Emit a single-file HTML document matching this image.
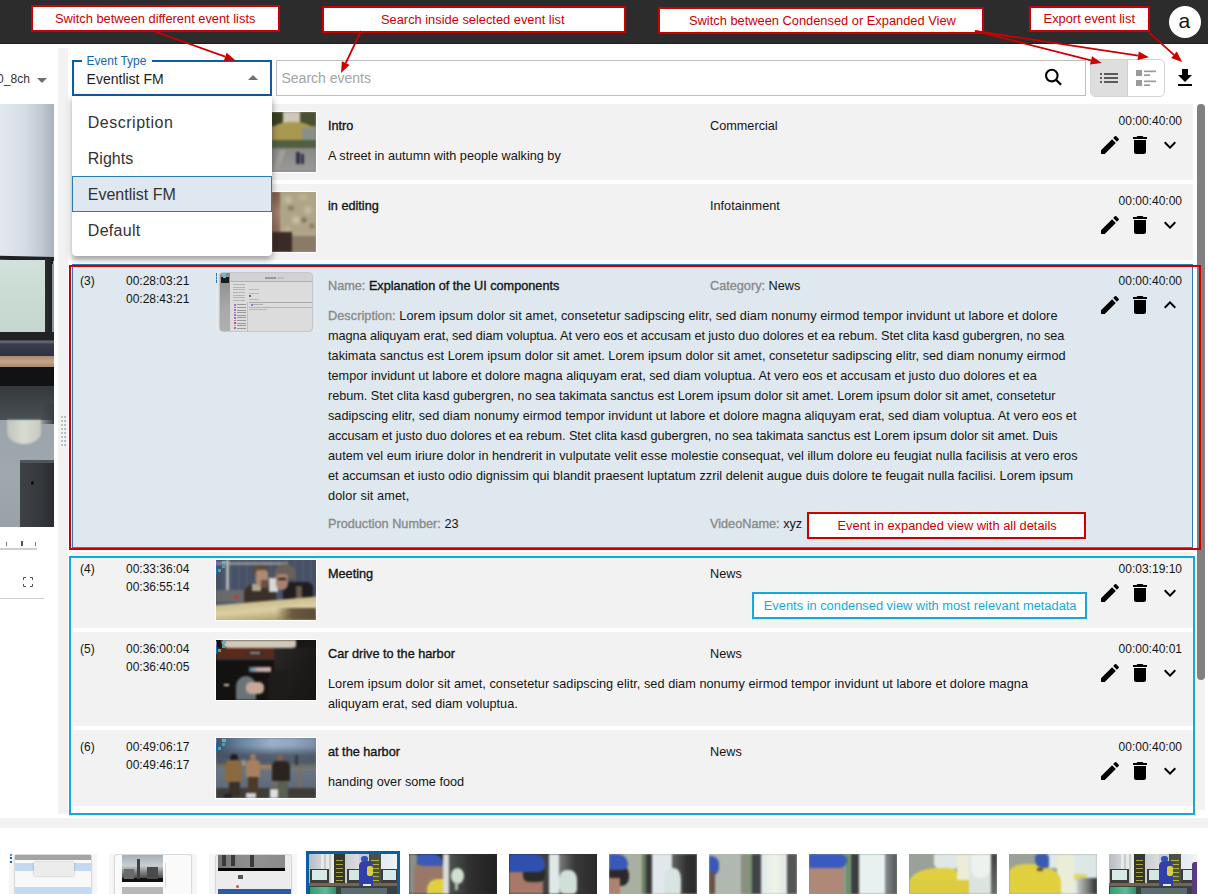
<!DOCTYPE html><html><head><meta charset="utf-8"><title>Event list</title><style>
*{margin:0;padding:0;box-sizing:border-box}
html,body{width:1208px;height:894px;overflow:hidden;background:#fff;font-family:"Liberation Sans",sans-serif;position:relative}
.t{position:absolute;white-space:nowrap}
.b{position:absolute}
svg{position:absolute;overflow:visible}
</style></head><body>
<div class="b" style="left:0px;top:0px;width:1208px;height:44px;background:#2c2c2c;border-bottom:1px solid #1f1f1f"></div>
<div class="t " style="left:-2.9px;top:68.84px;font-size:12px;line-height:20px;color:#333;">0_8ch</div>
<svg style="left:37px;top:78px" width="10" height="5"><path d="M0 0H10L5 5Z" fill="#707070"/></svg>
<div class="b" style="left:0;top:104px;width:54px;height:423px;overflow:hidden;background:#c8d0d8"><div style="position:absolute;left:0px;top:0px;width:54px;height:160px;background:linear-gradient(90deg,#e2e8ee 0%,#d6dde5 45%,#c2cad3 75%,#a9b2bc 100%)"></div><div style="position:absolute;left:-5px;top:153px;width:59px;height:4px;background:#1e2022;transform:rotate(1.2deg);transform-origin:right top"></div><div style="position:absolute;left:0px;top:156px;width:45px;height:77px;background:linear-gradient(180deg,#d2e2da,#c8dad2 60%,#c4d6ce)"></div><div style="position:absolute;left:45px;top:155px;width:8px;height:80px;background:linear-gradient(90deg,#2a2c2e,#1c1e20)"></div><div style="position:absolute;left:52px;top:160px;width:2px;height:76px;background:#8a929a"></div><div style="position:absolute;left:0px;top:228px;width:54px;height:8px;background:#202226"></div><div style="position:absolute;left:0px;top:236px;width:54px;height:16px;background:linear-gradient(180deg,#3a3e48 0,#6a7078 12%,#3a3e4a 25%,#2e3240 100%)"></div><div style="position:absolute;left:0px;top:252px;width:54px;height:11px;background:linear-gradient(180deg,#a88a70,#c4a488 50%,#a88a70)"></div><div style="position:absolute;left:0px;top:263px;width:54px;height:19px;background:#121214"></div><div style="position:absolute;left:0px;top:282px;width:54px;height:34px;background:linear-gradient(180deg,#34383c,#4a5056)"></div><div style="position:absolute;left:0px;top:316px;width:54px;height:107px;background:linear-gradient(180deg,#9aa4aa 0%,#a0a8ae 50%,#9aa2a8 100%)"></div><div style="position:absolute;left:7px;top:316px;width:34px;height:24px;background:linear-gradient(90deg,#c0c4bc,#d8dcd0 50%,#c8ccc0);border-radius:0 0 60% 60%;filter:blur(1px)"></div><div style="position:absolute;left:40px;top:300px;width:14px;height:20px;background:linear-gradient(90deg,rgba(50,54,58,0),#3a3e42)"></div><div style="position:absolute;left:20px;top:356px;width:34px;height:67px;background:linear-gradient(90deg,#3e4246,#35383c 60%,#2a2c30)"></div><div style="position:absolute;left:20px;top:356px;width:34px;height:3px;background:#50555a"></div><div style="position:absolute;left:31px;top:377px;width:3px;height:4px;background:#101010;border-radius:50%"></div></div>
<div class="b" style="left:0px;top:548px;width:37px;height:2px;background:#cfcfcf"></div>
<div class="b" style="left:6px;top:542px;width:1px;height:4px;background:#777"></div>
<div class="b" style="left:21px;top:541px;width:2px;height:5px;background:#555"></div>
<div class="b" style="left:35px;top:542px;width:1px;height:4px;background:#777"></div>
<svg style="left:23px;top:577px" width="10" height="10"><path d="M0.5 3V0.5H3M7 0.5H9.5V3M9.5 7V9.5H7M3 9.5H0.5V7" fill="none" stroke="#555" stroke-width="1"/></svg>
<div class="b" style="left:0px;top:598px;width:44px;height:1px;background:#cfcfcf"></div>
<div class="b" style="left:58px;top:48px;width:10px;height:766px;background:#f2f2f2"></div>
<div class="b" style="left:61px;top:416px;width:2px;height:2px;background:#bdbdbd"></div>
<div class="b" style="left:64px;top:416px;width:2px;height:2px;background:#bdbdbd"></div>
<div class="b" style="left:61px;top:420px;width:2px;height:2px;background:#bdbdbd"></div>
<div class="b" style="left:64px;top:420px;width:2px;height:2px;background:#bdbdbd"></div>
<div class="b" style="left:61px;top:424px;width:2px;height:2px;background:#bdbdbd"></div>
<div class="b" style="left:64px;top:424px;width:2px;height:2px;background:#bdbdbd"></div>
<div class="b" style="left:61px;top:428px;width:2px;height:2px;background:#bdbdbd"></div>
<div class="b" style="left:64px;top:428px;width:2px;height:2px;background:#bdbdbd"></div>
<div class="b" style="left:61px;top:432px;width:2px;height:2px;background:#bdbdbd"></div>
<div class="b" style="left:64px;top:432px;width:2px;height:2px;background:#bdbdbd"></div>
<div class="b" style="left:61px;top:436px;width:2px;height:2px;background:#bdbdbd"></div>
<div class="b" style="left:64px;top:436px;width:2px;height:2px;background:#bdbdbd"></div>
<div class="b" style="left:61px;top:440px;width:2px;height:2px;background:#bdbdbd"></div>
<div class="b" style="left:64px;top:440px;width:2px;height:2px;background:#bdbdbd"></div>
<div class="b" style="left:61px;top:444px;width:2px;height:2px;background:#bdbdbd"></div>
<div class="b" style="left:64px;top:444px;width:2px;height:2px;background:#bdbdbd"></div>
<div class="b" style="left:0px;top:818px;width:1208px;height:10px;background:#f2f2f2"></div>
<div class="b" style="left:72px;top:104px;width:1121px;height:76px;background:#f2f2f2"></div>
<div class="t " style="left:80px;top:110.59px;font-size:12px;line-height:20px;color:#141414;">(1)</div>
<div class="t " style="left:126px;top:110.59px;font-size:12px;line-height:20px;color:#141414;">00:27:23:21</div>
<div class="t " style="left:126px;top:128.59px;font-size:12px;line-height:20px;color:#141414;">00:28:03:21</div>
<div class="b" style="left:216px;top:112px;width:100px;height:60px;overflow:hidden;background:#8a8a88;outline:1px solid #fff"><div style="position:absolute;left:-4px;top:-4px;width:108px;height:68px;filter:blur(0.8px)"><div style="position:absolute;left:4px;top:4px;width:100px;height:60px;background:#8a8a88"><div style="position:absolute;left:0px;top:0px;width:100px;height:14px;background:#4a5030"></div><div style="position:absolute;left:66px;top:0px;width:18px;height:14px;background:#d0c8b8;border-radius:0 0 30% 30%"></div><div style="position:absolute;left:56px;top:0px;width:11px;height:14px;background:#3a4020;border-radius:0 0 40% 0"></div><div style="position:absolute;left:56px;top:10px;width:44px;height:22px;background:#a89850;border-radius:40% 50% 0 0"></div><div style="position:absolute;left:86px;top:16px;width:14px;height:16px;background:#8a9088"></div><div style="position:absolute;left:56px;top:28px;width:44px;height:9px;background:#506040"></div><div style="position:absolute;left:0px;top:36px;width:100px;height:24px;background:linear-gradient(180deg,#8a8a88,#9a9896)"></div><div style="position:absolute;left:60px;top:38px;width:6px;height:22px;background:#a09e98;transform:skewX(-20deg)"></div><div style="position:absolute;left:80px;top:40px;width:4px;height:12px;background:#30304a"></div><div style="position:absolute;left:85px;top:42px;width:3px;height:10px;background:#30304a"></div></div></div></div>
<div class="t " style="left:328px;top:115.60px;font-size:12.7px;line-height:20px;color:#141414;font-weight:normal;-webkit-text-stroke:0.35px currentColor;">Intro</div>
<div class="t " style="left:710px;top:115.60px;font-size:12.7px;line-height:20px;color:#141414;">Commercial</div>
<div class="t " style="left:328px;top:145.60px;font-size:12.7px;line-height:20px;color:#141414;">A street in autumn with people walking by</div>
<div class="t" style="right:26px;top:111.24px;font-size:12px;line-height:20px;color:#141414;">00:00:40:00</div>
<svg style="left:1098px;top:133px" width="24" height="24" viewBox="0 0 24 24"><path d="M3 17.25V21h3.75L17.81 9.94l-3.75-3.75L3 17.25zM20.71 7.04c.39-.39.39-1.02 0-1.41l-2.34-2.34a.996.996 0 0 0-1.41 0l-1.83 1.83 3.75 3.75 1.83-1.83z" fill="#000"/></svg>
<svg style="left:1128px;top:133px" width="24" height="24" viewBox="0 0 24 24"><path d="M6 19c0 1.1.9 2 2 2h8c1.1 0 2-.9 2-2V7H6v12zM19 4h-3.5l-1-1h-5l-1 1H5v2h14V4z" fill="#000"/></svg>
<svg style="left:1158px;top:133px" width="24" height="24" viewBox="0 0 24 24"><path d="M16.59 8.59L12 13.17 7.41 8.59 6 10l6 6 6-6z" fill="#000"/></svg>
<div class="b" style="left:72px;top:184px;width:1121px;height:76px;background:#f2f2f2"></div>
<div class="t " style="left:80px;top:190.59px;font-size:12px;line-height:20px;color:#141414;">(2)</div>
<div class="t " style="left:126px;top:190.59px;font-size:12px;line-height:20px;color:#141414;">00:27:43:21</div>
<div class="t " style="left:126px;top:208.59px;font-size:12px;line-height:20px;color:#141414;">00:28:23:21</div>
<div class="b" style="left:216px;top:192px;width:100px;height:60px;overflow:hidden;background:#a89c80;outline:1px solid #fff"><div style="position:absolute;left:-4px;top:-4px;width:108px;height:68px;filter:blur(0.8px)"><div style="position:absolute;left:4px;top:4px;width:100px;height:60px;background:#a89c80"><div style="position:absolute;left:56px;top:0px;width:12px;height:40px;background:linear-gradient(180deg,#7a5a48,#a08070 50%,#8a6a58)"></div><div style="position:absolute;left:64px;top:0px;width:36px;height:46px;background:#b0a488"></div><div style="position:absolute;left:66px;top:2px;width:12px;height:12px;background:radial-gradient(#c8c0a8,rgba(0,0,0,0) 70%)"></div><div style="position:absolute;left:80px;top:0px;width:14px;height:10px;background:radial-gradient(#c0b498,rgba(0,0,0,0) 70%)"></div><div style="position:absolute;left:70px;top:12px;width:10px;height:8px;background:radial-gradient(#7a6e58,rgba(0,0,0,0) 70%)"></div><div style="position:absolute;left:86px;top:12px;width:12px;height:12px;background:radial-gradient(#c8c0a8,rgba(0,0,0,0) 70%)"></div><div style="position:absolute;left:74px;top:22px;width:12px;height:12px;background:radial-gradient(#d0c8b0,rgba(0,0,0,0) 70%)"></div><div style="position:absolute;left:84px;top:24px;width:8px;height:8px;background:radial-gradient(#6a6050,rgba(0,0,0,0) 70%)"></div><div style="position:absolute;left:92px;top:30px;width:8px;height:8px;background:radial-gradient(#7a7058,rgba(0,0,0,0) 70%)"></div><div style="position:absolute;left:66px;top:32px;width:10px;height:10px;background:radial-gradient(#c0b498,rgba(0,0,0,0) 70%)"></div><div style="position:absolute;left:56px;top:40px;width:20px;height:20px;background:#3a2a28"></div><div style="position:absolute;left:76px;top:44px;width:24px;height:16px;background:#8a7a68"></div></div></div></div>
<div class="t " style="left:328px;top:195.60px;font-size:12.7px;line-height:20px;color:#141414;font-weight:normal;-webkit-text-stroke:0.35px currentColor;">in editing</div>
<div class="t " style="left:710px;top:195.60px;font-size:12.7px;line-height:20px;color:#141414;">Infotainment</div>
<div class="t" style="right:26px;top:191.24px;font-size:12px;line-height:20px;color:#141414;">00:00:40:00</div>
<svg style="left:1098px;top:213px" width="24" height="24" viewBox="0 0 24 24"><path d="M3 17.25V21h3.75L17.81 9.94l-3.75-3.75L3 17.25zM20.71 7.04c.39-.39.39-1.02 0-1.41l-2.34-2.34a.996.996 0 0 0-1.41 0l-1.83 1.83 3.75 3.75 1.83-1.83z" fill="#000"/></svg>
<svg style="left:1128px;top:213px" width="24" height="24" viewBox="0 0 24 24"><path d="M6 19c0 1.1.9 2 2 2h8c1.1 0 2-.9 2-2V7H6v12zM19 4h-3.5l-1-1h-5l-1 1H5v2h14V4z" fill="#000"/></svg>
<svg style="left:1158px;top:213px" width="24" height="24" viewBox="0 0 24 24"><path d="M16.59 8.59L12 13.17 7.41 8.59 6 10l6 6 6-6z" fill="#000"/></svg>
<div class="b" style="left:72px;top:264px;width:1121px;height:284px;background:#dee8ee;border:1px solid #2b7bb9"></div>
<div class="t " style="left:80px;top:270.59px;font-size:12px;line-height:20px;color:#141414;">(3)</div>
<div class="t " style="left:126px;top:270.59px;font-size:12px;line-height:20px;color:#141414;">00:28:03:21</div>
<div class="t " style="left:126px;top:288.59px;font-size:12px;line-height:20px;color:#141414;">00:28:43:21</div>
<div class="b" style="left:216px;top:272px;width:100px;height:60px;background:#e6eaee;overflow:hidden"><div style="position:absolute;left:4px;top:1px;width:92px;height:58px;background:#dcdcdc;border-radius:3px;box-shadow:0 0 2px rgba(0,0,0,.55)"></div><div style="position:absolute;left:4px;top:1px;width:10px;height:58px;background:linear-gradient(#8a8a8a,#a8a8a8 60%,#b0b0b0);border-radius:3px 0 0 3px"></div><div style="position:absolute;left:5px;top:5px;width:8px;height:6px;background:#1c1c1c"></div><div style="position:absolute;left:14px;top:1px;width:82px;height:8px;background:#d2d2d2;border-radius:0 3px 0 0"></div><div style="position:absolute;left:14px;top:9px;width:82px;height:1px;background:#b0b0b0"></div><div style="position:absolute;left:49px;top:5px;width:11px;height:2px;background:#9a9a9a"></div><div style="position:absolute;left:61px;top:5px;width:7px;height:2px;background:#c0c0c0"></div><div style="position:absolute;left:17px;top:12px;width:12px;height:1px;background:#b4b4b4"></div><div style="position:absolute;left:17px;top:14.5px;width:12px;height:1px;background:#b4b4b4"></div><div style="position:absolute;left:17px;top:17px;width:12px;height:1px;background:#b4b4b4"></div><div style="position:absolute;left:17px;top:20px;width:12px;height:1px;background:#b4b4b4"></div><div style="position:absolute;left:17px;top:22.5px;width:12px;height:1px;background:#b4b4b4"></div><div style="position:absolute;left:17px;top:25px;width:12px;height:1px;background:#b4b4b4"></div><div style="position:absolute;left:17px;top:27.5px;width:12px;height:1px;background:#b4b4b4"></div><div style="position:absolute;left:33px;top:17px;width:10px;height:1px;background:#b8b8b8"></div><div style="position:absolute;left:33px;top:21px;width:10px;height:1px;background:#b8b8b8"></div><div style="position:absolute;left:33px;top:27px;width:10px;height:1px;background:#b8b8b8"></div><div style="position:absolute;left:33px;top:23px;width:1.5px;height:2px;background:#666"></div><div style="position:absolute;left:33px;top:30px;width:63px;height:1px;background:#a8a8a8"></div><div style="position:absolute;left:33px;top:35px;width:63px;height:1px;background:#b4b4b4"></div><div style="position:absolute;left:31px;top:30px;width:1px;height:29px;background:#c0c0c0"></div><div style="position:absolute;left:18px;top:32.0px;width:2px;height:1.6px;background:#a070d0"></div><div style="position:absolute;left:21px;top:32.3px;width:9px;height:1px;background:#9a9a9a"></div><div style="position:absolute;left:18px;top:34.6px;width:2px;height:1.6px;background:#a070d0"></div><div style="position:absolute;left:21px;top:34.9px;width:9px;height:1px;background:#9a9a9a"></div><div style="position:absolute;left:18px;top:37.2px;width:2px;height:1.6px;background:#a070d0"></div><div style="position:absolute;left:21px;top:37.5px;width:9px;height:1px;background:#9a9a9a"></div><div style="position:absolute;left:18px;top:39.8px;width:2px;height:1.6px;background:#a070d0"></div><div style="position:absolute;left:21px;top:40.099999999999994px;width:9px;height:1px;background:#9a9a9a"></div><div style="position:absolute;left:18px;top:42.4px;width:2px;height:1.6px;background:#a070d0"></div><div style="position:absolute;left:21px;top:42.699999999999996px;width:9px;height:1px;background:#9a9a9a"></div><div style="position:absolute;left:18px;top:45.0px;width:2px;height:1.6px;background:#a070d0"></div><div style="position:absolute;left:21px;top:45.3px;width:9px;height:1px;background:#9a9a9a"></div><div style="position:absolute;left:18px;top:47.6px;width:2px;height:1.6px;background:#a070d0"></div><div style="position:absolute;left:21px;top:47.9px;width:9px;height:1px;background:#9a9a9a"></div><div style="position:absolute;left:18px;top:50.2px;width:2px;height:1.6px;background:#d05050"></div><div style="position:absolute;left:21px;top:50.5px;width:9px;height:1px;background:#9a9a9a"></div><div style="position:absolute;left:18px;top:52.8px;width:2px;height:1.6px;background:#a0c040"></div><div style="position:absolute;left:21px;top:53.099999999999994px;width:9px;height:1px;background:#9a9a9a"></div><div style="position:absolute;left:18px;top:55.400000000000006px;width:2px;height:1.6px;background:#a070d0"></div><div style="position:absolute;left:21px;top:55.7px;width:9px;height:1px;background:#9a9a9a"></div><div style="position:absolute;left:35px;top:31.5px;width:1.5px;height:2px;background:#a070d0"></div><div style="position:absolute;left:37px;top:32px;width:10px;height:1px;background:#b0b0b0"></div><div style="position:absolute;left:33px;top:37px;width:18px;height:1px;background:#b8b8b8"></div><div style="position:absolute;left:6px;top:1px;width:4px;height:3px;background:#60c0d0"></div><div style="position:absolute;left:7px;top:4px;width:3px;height:2px;background:#60c0d0"></div><div style="position:absolute;left:0px;top:1px;width:1px;height:10px;border-left:1px dashed #3070c0"></div></div>
<div class="t " style="left:328px;top:275.60px;font-size:12.7px;line-height:20px;color:#141414;font-weight:normal;-webkit-text-stroke:0.35px currentColor;"><span style="color:#8a8a8a">Name:</span> Explanation of the UI components</div>
<div class="t " style="left:710px;top:275.60px;font-size:12.7px;line-height:20px;color:#141414;font-weight:normal;-webkit-text-stroke:0.35px currentColor;"><span style="color:#8a8a8a">Category:</span> <span style="-webkit-text-stroke:0">News</span></div>
<div class="t " style="left:328px;top:305.60px;font-size:12.7px;line-height:20px;color:#141414;letter-spacing:0.0575px"><span style="color:#8a8a8a;-webkit-text-stroke:0.35px currentColor">Description:</span> Lorem ipsum dolor sit amet, consetetur sadipscing elitr, sed diam nonumy eirmod tempor invidunt ut labore et dolore</div>
<div class="t " style="left:328px;top:325.60px;font-size:12.7px;line-height:20px;color:#141414;letter-spacing:-0.0713px">magna aliquyam erat, sed diam voluptua. At vero eos et accusam et justo duo dolores et ea rebum. Stet clita kasd gubergren, no sea</div>
<div class="t " style="left:328px;top:345.60px;font-size:12.7px;line-height:20px;color:#141414;letter-spacing:0.0220px">takimata sanctus est Lorem ipsum dolor sit amet. Lorem ipsum dolor sit amet, consetetur sadipscing elitr, sed diam nonumy eirmod</div>
<div class="t " style="left:328px;top:365.60px;font-size:12.7px;line-height:20px;color:#141414;letter-spacing:-0.0056px">tempor invidunt ut labore et dolore magna aliquyam erat, sed diam voluptua. At vero eos et accusam et justo duo dolores et ea</div>
<div class="t " style="left:328px;top:385.60px;font-size:12.7px;line-height:20px;color:#141414;letter-spacing:-0.0236px">rebum. Stet clita kasd gubergren, no sea takimata sanctus est Lorem ipsum dolor sit amet. Lorem ipsum dolor sit amet, consetetur</div>
<div class="t " style="left:328px;top:405.60px;font-size:12.7px;line-height:20px;color:#141414;letter-spacing:0.0231px">sadipscing elitr, sed diam nonumy eirmod tempor invidunt ut labore et dolore magna aliquyam erat, sed diam voluptua. At vero eos et</div>
<div class="t " style="left:328px;top:425.60px;font-size:12.7px;line-height:20px;color:#141414;letter-spacing:-0.0570px">accusam et justo duo dolores et ea rebum. Stet clita kasd gubergren, no sea takimata sanctus est Lorem ipsum dolor sit amet. Duis</div>
<div class="t " style="left:328px;top:445.60px;font-size:12.7px;line-height:20px;color:#141414;letter-spacing:0.0144px">autem vel eum iriure dolor in hendrerit in vulputate velit esse molestie consequat, vel illum dolore eu feugiat nulla facilisis at vero eros</div>
<div class="t " style="left:328px;top:465.60px;font-size:12.7px;line-height:20px;color:#141414;letter-spacing:0.0185px">et accumsan et iusto odio dignissim qui blandit praesent luptatum zzril delenit augue duis dolore te feugait nulla facilisi. Lorem ipsum</div>
<div class="t " style="left:328px;top:485.60px;font-size:12.7px;line-height:20px;color:#141414;letter-spacing:0.1143px">dolor sit amet,</div>
<div class="t " style="left:328px;top:513.60px;font-size:12.7px;line-height:20px;color:#141414;font-weight:normal;-webkit-text-stroke:0.35px currentColor;"><span style="color:#8a8a8a">Production Number:</span> <span style="-webkit-text-stroke:0">23</span></div>
<div class="t " style="left:710px;top:513.60px;font-size:12.7px;line-height:20px;color:#141414;font-weight:normal;-webkit-text-stroke:0.35px currentColor;"><span style="color:#8a8a8a">VideoName:</span> <span style="-webkit-text-stroke:0">xyz</span></div>
<div class="t" style="right:26px;top:271.24px;font-size:12px;line-height:20px;color:#141414;">00:00:40:00</div>
<svg style="left:1098px;top:293px" width="24" height="24" viewBox="0 0 24 24"><path d="M3 17.25V21h3.75L17.81 9.94l-3.75-3.75L3 17.25zM20.71 7.04c.39-.39.39-1.02 0-1.41l-2.34-2.34a.996.996 0 0 0-1.41 0l-1.83 1.83 3.75 3.75 1.83-1.83z" fill="#000"/></svg>
<svg style="left:1128px;top:293px" width="24" height="24" viewBox="0 0 24 24"><path d="M6 19c0 1.1.9 2 2 2h8c1.1 0 2-.9 2-2V7H6v12zM19 4h-3.5l-1-1h-5l-1 1H5v2h14V4z" fill="#000"/></svg>
<svg style="left:1158px;top:293px" width="24" height="24" viewBox="0 0 24 24"><path d="M12 8l-6 6 1.41 1.41L12 10.83l4.59 4.58L18 14z" fill="#000"/></svg>
<div class="b" style="left:72px;top:552px;width:1121px;height:76px;background:#f2f2f2"></div>
<div class="t " style="left:80px;top:558.59px;font-size:12px;line-height:20px;color:#141414;">(4)</div>
<div class="t " style="left:126px;top:558.59px;font-size:12px;line-height:20px;color:#141414;">00:33:36:04</div>
<div class="t " style="left:126px;top:576.59px;font-size:12px;line-height:20px;color:#141414;">00:36:55:14</div>
<div class="b" style="left:216px;top:560px;width:100px;height:60px;overflow:hidden;background:#4a5468;outline:1px solid #fff"><div style="position:absolute;left:-4px;top:-4px;width:108px;height:68px;filter:blur(0.8px)"><div style="position:absolute;left:4px;top:4px;width:100px;height:60px;background:#4a5468"><div style="position:absolute;left:0px;top:0px;width:100px;height:42px;background:repeating-linear-gradient(90deg,#465066 0 6px,#505a6c 6px 8px)"></div><div style="position:absolute;left:0px;top:2px;width:72px;height:3px;background:#8a8e90"></div><div style="position:absolute;left:10px;top:0px;width:3px;height:32px;background:#b8b8b0"></div><div style="position:absolute;left:0px;top:30px;width:28px;height:12px;background:#6a6a6c"></div><div style="position:absolute;left:18px;top:35px;width:5px;height:4px;background:#a04848"></div><div style="position:absolute;left:28px;top:24px;width:32px;height:22px;background:#3a3028;border-radius:10px 10px 0 0"></div><div style="position:absolute;left:36px;top:24px;width:9px;height:7px;background:#b0a890"></div><div style="position:absolute;left:37px;top:5px;width:15px;height:9px;background:#5a4a3c;border-radius:6px 6px 0 0"></div><div style="position:absolute;left:40px;top:10px;width:12px;height:17px;background:#b08a70;border-radius:2px 4px 6px 6px"></div><div style="position:absolute;left:45px;top:20px;width:7px;height:8px;background:#6a5040"></div><div style="position:absolute;left:53px;top:18px;width:9px;height:14px;background:#d8d8d8"></div><div style="position:absolute;left:67px;top:22px;width:30px;height:20px;background:#201c20;border-radius:8px 6px 0 0"></div><div style="position:absolute;left:80px;top:26px;width:6px;height:16px;background:#6a5a48"></div><div style="position:absolute;left:58px;top:4px;width:22px;height:15px;background:#6a6058;border-radius:10px 10px 4px 4px"></div><div style="position:absolute;left:60px;top:14px;width:12px;height:16px;background:#a88070;border-radius:3px 3px 6px 6px"></div><div style="position:absolute;left:62px;top:18px;width:8px;height:2px;background:#202020"></div><div style="position:absolute;left:-10px;top:41px;width:120px;height:30px;background:linear-gradient(180deg,#c8bc8a,#dcd0a4 30%,#b8a878 60%,#8a7a54);transform:rotate(-5deg)"></div><div style="position:absolute;left:60px;top:48px;width:40px;height:12px;background:linear-gradient(90deg,rgba(106,90,64,0),#6a5a40 40%,#5a4c38)"></div></div></div></div><div class="b" style="left:216px;top:560px;width:12px;height:16px"><div style="position:absolute;left:6px;top:1px;width:3.5px;height:3px;background:#5ab8c0;filter:blur(0.4px)"></div><div style="position:absolute;left:6px;top:5px;width:3px;height:3px;background:#3aa8b0;filter:blur(0.4px)"></div><div style="position:absolute;left:2px;top:9px;width:3px;height:3px;background:#3aa8b0;filter:blur(0.4px)"></div><div style="position:absolute;left:0px;top:1px;width:1px;height:4px;background:#7a6ab8"></div><div style="position:absolute;left:0px;top:5px;width:1px;height:9px;background:#1a70b0"></div></div>
<div class="t " style="left:328px;top:563.60px;font-size:12.7px;line-height:20px;color:#141414;font-weight:normal;-webkit-text-stroke:0.35px currentColor;">Meeting</div>
<div class="t " style="left:710px;top:563.60px;font-size:12.7px;line-height:20px;color:#141414;">News</div>
<div class="t" style="right:26px;top:559.24px;font-size:12px;line-height:20px;color:#141414;">00:03:19:10</div>
<svg style="left:1098px;top:581px" width="24" height="24" viewBox="0 0 24 24"><path d="M3 17.25V21h3.75L17.81 9.94l-3.75-3.75L3 17.25zM20.71 7.04c.39-.39.39-1.02 0-1.41l-2.34-2.34a.996.996 0 0 0-1.41 0l-1.83 1.83 3.75 3.75 1.83-1.83z" fill="#000"/></svg>
<svg style="left:1128px;top:581px" width="24" height="24" viewBox="0 0 24 24"><path d="M6 19c0 1.1.9 2 2 2h8c1.1 0 2-.9 2-2V7H6v12zM19 4h-3.5l-1-1h-5l-1 1H5v2h14V4z" fill="#000"/></svg>
<svg style="left:1158px;top:581px" width="24" height="24" viewBox="0 0 24 24"><path d="M16.59 8.59L12 13.17 7.41 8.59 6 10l6 6 6-6z" fill="#000"/></svg>
<div class="b" style="left:72px;top:632px;width:1121px;height:94px;background:#f2f2f2"></div>
<div class="t " style="left:80px;top:638.59px;font-size:12px;line-height:20px;color:#141414;">(5)</div>
<div class="t " style="left:126px;top:638.59px;font-size:12px;line-height:20px;color:#141414;">00:36:00:04</div>
<div class="t " style="left:126px;top:656.59px;font-size:12px;line-height:20px;color:#141414;">00:36:40:05</div>
<div class="b" style="left:216px;top:640px;width:100px;height:60px;overflow:hidden;background:#141210;outline:1px solid #fff"><div style="position:absolute;left:-4px;top:-4px;width:108px;height:68px;filter:blur(0.8px)"><div style="position:absolute;left:4px;top:4px;width:100px;height:60px;background:#141210"><div style="position:absolute;left:6px;top:0px;width:76px;height:8px;background:#d0c8b8;border-radius:0 0 6px 6px"></div><div style="position:absolute;left:0px;top:8px;width:78px;height:10px;background:#5a2a1a"></div><div style="position:absolute;left:30px;top:11px;width:18px;height:5px;background:#3a3030"></div><div style="position:absolute;left:34px;top:12px;width:10px;height:2px;background:#9a8a88"></div><div style="position:absolute;left:0px;top:18px;width:80px;height:2px;background:#3a3430"></div><div style="position:absolute;left:33px;top:27px;width:22px;height:5px;background:linear-gradient(90deg,#3a7a98,#c0a8a8 40%,#d0b0a8)"></div><div style="position:absolute;left:20px;top:36px;width:20px;height:24px;background:#6a7478;border-radius:10px 10px 0 0"></div><div style="position:absolute;left:30px;top:42px;width:18px;height:12px;background:#c8a898;border-radius:5px"></div><div style="position:absolute;left:8px;top:44px;width:5px;height:2px;background:#d0d0c8"></div><div style="position:absolute;left:58px;top:8px;width:42px;height:52px;background:linear-gradient(120deg,#2a2826,#1e1c1a 50%,#181614)"></div><div style="position:absolute;left:52px;top:30px;width:20px;height:30px;background:#1e1c1a;border-radius:10px 0 0 0"></div><div style="position:absolute;left:80px;top:0px;width:20px;height:8px;background:#1a1816"></div></div></div></div><div class="b" style="left:216px;top:640px;width:12px;height:16px"><div style="position:absolute;left:6px;top:1px;width:3.5px;height:3px;background:#5ab8c0;filter:blur(0.4px)"></div><div style="position:absolute;left:6px;top:5px;width:3px;height:3px;background:#3aa8b0;filter:blur(0.4px)"></div><div style="position:absolute;left:2px;top:9px;width:3px;height:3px;background:#3aa8b0;filter:blur(0.4px)"></div><div style="position:absolute;left:0px;top:1px;width:1px;height:4px;background:#7a6ab8"></div><div style="position:absolute;left:0px;top:5px;width:1px;height:9px;background:#1a70b0"></div></div>
<div class="t " style="left:328px;top:643.60px;font-size:12.7px;line-height:20px;color:#141414;font-weight:normal;-webkit-text-stroke:0.35px currentColor;">Car drive to the harbor</div>
<div class="t " style="left:710px;top:643.60px;font-size:12.7px;line-height:20px;color:#141414;">News</div>
<div class="t " style="left:328px;top:673.60px;font-size:12.7px;line-height:20px;color:#141414;letter-spacing:0.0500px">Lorem ipsum dolor sit amet, consetetur sadipscing elitr, sed diam nonumy eirmod tempor invidunt ut labore et dolore magna</div>
<div class="t " style="left:328px;top:693.60px;font-size:12.7px;line-height:20px;color:#141414;">aliquyam erat, sed diam voluptua.</div>
<div class="t" style="right:26px;top:639.24px;font-size:12px;line-height:20px;color:#141414;">00:00:40:01</div>
<svg style="left:1098px;top:661px" width="24" height="24" viewBox="0 0 24 24"><path d="M3 17.25V21h3.75L17.81 9.94l-3.75-3.75L3 17.25zM20.71 7.04c.39-.39.39-1.02 0-1.41l-2.34-2.34a.996.996 0 0 0-1.41 0l-1.83 1.83 3.75 3.75 1.83-1.83z" fill="#000"/></svg>
<svg style="left:1128px;top:661px" width="24" height="24" viewBox="0 0 24 24"><path d="M6 19c0 1.1.9 2 2 2h8c1.1 0 2-.9 2-2V7H6v12zM19 4h-3.5l-1-1h-5l-1 1H5v2h14V4z" fill="#000"/></svg>
<svg style="left:1158px;top:661px" width="24" height="24" viewBox="0 0 24 24"><path d="M16.59 8.59L12 13.17 7.41 8.59 6 10l6 6 6-6z" fill="#000"/></svg>
<div class="b" style="left:72px;top:730px;width:1121px;height:76px;background:#f2f2f2"></div>
<div class="t " style="left:80px;top:736.59px;font-size:12px;line-height:20px;color:#141414;">(6)</div>
<div class="t " style="left:126px;top:736.59px;font-size:12px;line-height:20px;color:#141414;">00:49:06:17</div>
<div class="t " style="left:126px;top:754.59px;font-size:12px;line-height:20px;color:#141414;">00:49:46:17</div>
<div class="b" style="left:216px;top:738px;width:100px;height:60px;overflow:hidden;background:#6a7686;outline:1px solid #fff"><div style="position:absolute;left:-4px;top:-4px;width:108px;height:68px;filter:blur(0.8px)"><div style="position:absolute;left:4px;top:4px;width:100px;height:60px;background:#6a7686"><div style="position:absolute;left:0px;top:0px;width:100px;height:27px;background:linear-gradient(90deg,#3e5068,#6a84a0 25%,#9ab0c8 55%,#90a8c0 75%,#7a90a8)"></div><div style="position:absolute;left:0px;top:8px;width:100px;height:19px;background:linear-gradient(180deg,rgba(70,80,96,0),rgba(70,80,96,.85) 50%,#505a66)"></div><div style="position:absolute;left:0px;top:26px;width:100px;height:4px;background:#6a7064"></div><div style="position:absolute;left:25px;top:22px;width:5px;height:6px;background:#8a9090"></div><div style="position:absolute;left:79px;top:17px;width:3px;height:10px;background:#3a3a40"></div><div style="position:absolute;left:0px;top:30px;width:100px;height:21px;background:linear-gradient(180deg,#6a7686,#5e6a7a)"></div><div style="position:absolute;left:55px;top:31px;width:45px;height:1px;background:#8a7a68"></div><div style="position:absolute;left:58px;top:31px;width:2px;height:22px;background:#8a6a4a"></div><div style="position:absolute;left:83px;top:31px;width:2px;height:24px;background:#8a6a4a"></div><div style="position:absolute;left:0px;top:50px;width:100px;height:10px;background:#3e3c38"></div><div style="position:absolute;left:14px;top:16px;width:8px;height:6px;background:#1e1e20;border-radius:4px 4px 0 0"></div><div style="position:absolute;left:9px;top:22px;width:17px;height:22px;background:#8a6a40;border-radius:5px 5px 2px 2px"></div><div style="position:absolute;left:13px;top:44px;width:11px;height:14px;background:#3a3028"></div><div style="position:absolute;left:34px;top:16px;width:6px;height:6px;background:#a07860;border-radius:3px"></div><div style="position:absolute;left:30px;top:22px;width:14px;height:17px;background:#a88060;border-radius:4px 4px 0 0"></div><div style="position:absolute;left:42px;top:27px;width:14px;height:4px;background:#a08060"></div><div style="position:absolute;left:32px;top:39px;width:10px;height:19px;background:#4a3a28"></div><div style="position:absolute;left:61px;top:17px;width:6px;height:6px;background:#8a6048;border-radius:3px"></div><div style="position:absolute;left:56px;top:23px;width:18px;height:20px;background:#2a2420;border-radius:5px 5px 0 0"></div><div style="position:absolute;left:62px;top:43px;width:10px;height:17px;background:#5a6050"></div><div style="position:absolute;left:54px;top:51px;width:8px;height:9px;background:#e0e0e0"></div><div style="position:absolute;left:30px;top:55px;width:10px;height:5px;background:#d0d0d8"></div><div style="position:absolute;left:8px;top:56px;width:8px;height:4px;background:#202020"></div></div></div></div><div class="b" style="left:216px;top:738px;width:12px;height:16px"><div style="position:absolute;left:6px;top:1px;width:3.5px;height:3px;background:#5ab8c0;filter:blur(0.4px)"></div><div style="position:absolute;left:6px;top:5px;width:3px;height:3px;background:#3aa8b0;filter:blur(0.4px)"></div><div style="position:absolute;left:2px;top:9px;width:3px;height:3px;background:#3aa8b0;filter:blur(0.4px)"></div><div style="position:absolute;left:0px;top:1px;width:1px;height:4px;background:#7a6ab8"></div><div style="position:absolute;left:0px;top:5px;width:1px;height:9px;background:#1a70b0"></div></div>
<div class="t " style="left:328px;top:741.60px;font-size:12.7px;line-height:20px;color:#141414;font-weight:normal;-webkit-text-stroke:0.35px currentColor;">at the harbor</div>
<div class="t " style="left:710px;top:741.60px;font-size:12.7px;line-height:20px;color:#141414;">News</div>
<div class="t " style="left:328px;top:771.60px;font-size:12.7px;line-height:20px;color:#141414;">handing over some food</div>
<div class="t" style="right:26px;top:737.24px;font-size:12px;line-height:20px;color:#141414;">00:00:40:00</div>
<svg style="left:1098px;top:759px" width="24" height="24" viewBox="0 0 24 24"><path d="M3 17.25V21h3.75L17.81 9.94l-3.75-3.75L3 17.25zM20.71 7.04c.39-.39.39-1.02 0-1.41l-2.34-2.34a.996.996 0 0 0-1.41 0l-1.83 1.83 3.75 3.75 1.83-1.83z" fill="#000"/></svg>
<svg style="left:1128px;top:759px" width="24" height="24" viewBox="0 0 24 24"><path d="M6 19c0 1.1.9 2 2 2h8c1.1 0 2-.9 2-2V7H6v12zM19 4h-3.5l-1-1h-5l-1 1H5v2h14V4z" fill="#000"/></svg>
<svg style="left:1158px;top:759px" width="24" height="24" viewBox="0 0 24 24"><path d="M16.59 8.59L12 13.17 7.41 8.59 6 10l6 6 6-6z" fill="#000"/></svg>
<div class="b" style="left:1197px;top:104px;width:8px;height:706px;background:#f2f2f2"></div>
<div class="b" style="left:1197px;top:104px;width:8px;height:576px;background:#808080;border-radius:4px"></div>
<div class="b" style="left:72px;top:60px;width:200px;height:36px;border:2px solid #0b5ea6;background:#fff"></div>
<div class="b" style="left:82px;top:58px;width:70px;height:5px;background:#fff"></div>
<div class="t " style="left:86.6px;top:53.84px;font-size:12px;line-height:14px;color:#1565b0;">Event Type</div>
<div class="t " style="left:86.6px;top:68.95px;font-size:14px;line-height:20px;color:#1e1e1e;">Eventlist FM</div>
<svg style="left:248px;top:75px" width="10" height="5"><path d="M0 5H10L5 0Z" fill="#707070"/></svg>
<div class="b" style="left:72px;top:96px;width:200px;height:160px;background:#fff;border-radius:0 0 4px 4px;box-shadow:0 4px 6px rgba(0,0,0,0.27),0 1px 10px rgba(0,0,0,0.13)"></div>
<div class="b" style="left:72px;top:176px;width:200px;height:36px;background:#dfe8f0;border:1px solid #2b7bb9"></div>
<div class="t " style="left:87.8px;top:113.46px;font-size:16px;line-height:20px;color:#333;letter-spacing:0.5px">Description</div>
<div class="t " style="left:87.8px;top:149.46px;font-size:16px;line-height:20px;color:#333;letter-spacing:0px">Rights</div>
<div class="t " style="left:87.8px;top:185.46px;font-size:16px;line-height:20px;color:#333;letter-spacing:0px">Eventlist FM</div>
<div class="t " style="left:87.8px;top:221.46px;font-size:16px;line-height:20px;color:#333;letter-spacing:0.3px">Default</div>
<div class="b" style="left:276px;top:60px;width:810px;height:36px;border:1px solid #bdbdbd;background:#fff"></div>
<div class="t " style="left:281.5px;top:67.95px;font-size:14px;line-height:20px;color:#a3a3a3;">Search events</div>
<svg style="left:1042px;top:66px" width="22" height="22" viewBox="0 0 22 22"><circle cx="9.8" cy="9.6" r="5.8" fill="none" stroke="#000" stroke-width="2.1"/><path d="M14 13.8L19 18.8" stroke="#000" stroke-width="2.3" stroke-linecap="butt"/></svg>
<div class="b" style="left:1090px;top:59px;width:75px;height:38px;border:1px solid #d5d5d5;border-radius:5px;overflow:hidden;background:#fff"><div style="position:absolute;left:0;top:0;width:37px;height:36px;background:#dedede;border-right:1px solid #cfcfcf"></div></div>
<svg style="left:1100px;top:72px" width="20" height="12"><g fill="#5a5a5a"><rect x="0" y="1" width="2" height="2"/><rect x="0" y="5" width="2" height="2"/><rect x="0" y="9" width="2" height="2"/><rect x="4" y="1" width="14" height="2"/><rect x="4" y="5" width="14" height="2"/><rect x="4" y="9" width="14" height="2"/></g></svg>
<svg style="left:1136px;top:70px" width="22" height="17"><g fill="#9a9a9a"><rect x="0" y="0" width="6" height="6"/><rect x="0" y="10" width="6" height="6"/><rect x="8" y="0.5" width="12" height="1.7"/><rect x="8" y="4.3" width="6" height="1.7"/><rect x="8" y="10.5" width="12" height="1.7"/><rect x="8" y="14.3" width="6" height="1.7"/></g></svg>
<svg style="left:1173px;top:66px" width="24" height="24" viewBox="0 0 24 24"><path d="M19 9h-4V3H9v6H5l7 7 7-7zM5 18v2h14v-2H5z" fill="#000"/></svg>
<div class="b" style="left:31px;top:5px;width:249px;height:27px;border:2px solid #cc0000;background:#fff"></div>
<div class="t " style="left:55px;top:10.65px;font-size:12.85px;line-height:16px;color:#cc0000;">Switch between different event lists</div>
<div class="b" style="left:322px;top:6px;width:304px;height:27px;border:2px solid #cc0000;background:#fff"></div>
<div class="t " style="left:381px;top:11.65px;font-size:12.85px;line-height:16px;color:#cc0000;">Search inside selected event list</div>
<div class="b" style="left:658px;top:7px;width:326px;height:27px;border:2px solid #cc0000;background:#fff"></div>
<div class="t " style="left:689px;top:12.65px;font-size:12.85px;line-height:16px;color:#cc0000;">Switch between Condensed or Expanded View</div>
<div class="b" style="left:1029px;top:6px;width:121px;height:26px;border:2px solid #cc0000;background:#fff"></div>
<div class="t " style="left:1043.6px;top:11.15px;font-size:12.85px;line-height:16px;color:#cc0000;">Export event list</div>
<div class="b" style="left:1169px;top:6px;width:32px;height:32px;border-radius:50%;background:#fff"></div>
<div class="t " style="left:1178.5px;top:8.72px;font-size:21px;line-height:24px;color:#111;">a</div>
<div class="b" style="left:69px;top:265px;width:1132px;height:285px;border:2px solid #cc0000"></div>
<div class="b" style="left:807px;top:512px;width:279px;height:27px;border:2px solid #cc0000;background:#fff"></div>
<div class="t " style="left:837.5px;top:517.65px;font-size:12.85px;line-height:16px;color:#cc0000;">Event in expanded view with all details</div>
<div class="b" style="left:69px;top:556px;width:1126px;height:259px;border:2px solid #14a9dd"></div>
<div class="b" style="left:752px;top:592px;width:335px;height:27px;border:2px solid #14a9dd;background:#fff"></div>
<div class="t " style="left:763.8px;top:597.65px;font-size:12.85px;line-height:16px;color:#14a9dd;">Events in condensed view with most relevant metadata</div>
<svg style="left:0;top:0" width="1208" height="894">
<path d="M156.0 32.0L225.2 56.7" stroke="#cc0000" stroke-width="1.8" fill="none"/>
<path d="M235.6 60.4L223.8 60.7L226.7 52.7Z" fill="#cc0000"/>
<path d="M361.0 31.0L345.7 63.1" stroke="#cc0000" stroke-width="1.8" fill="none"/>
<path d="M341.0 73.0L341.9 61.2L349.6 64.9Z" fill="#cc0000"/>
<path d="M975.0 31.0L1091.0 60.4" stroke="#cc0000" stroke-width="1.8" fill="none"/>
<path d="M1101.7 63.1L1090.0 64.5L1092.1 56.3Z" fill="#cc0000"/>
<path d="M975.0 31.0L1138.1 55.7" stroke="#cc0000" stroke-width="1.8" fill="none"/>
<path d="M1149.0 57.3L1137.5 59.9L1138.8 51.5Z" fill="#cc0000"/>
<path d="M1149.0 32.4L1174.0 54.8" stroke="#cc0000" stroke-width="1.8" fill="none"/>
<path d="M1182.2 62.1L1171.2 57.9L1176.8 51.6Z" fill="#cc0000"/>
</svg>
<div class="b" style="left:306px;top:851px;width:94px;height:43px;background:#0b5ea6"></div>
<div class="b" style="left:9px;top:854px;width:88px;height:40px;background:#f6f6f6;overflow:hidden"><div style="position:absolute;left:6px;top:1px;width:76px;height:40px;background:#f8f8f8;box-shadow:0 0 2px rgba(0,0,0,.45);border-radius:2px"></div><div style="position:absolute;left:6px;top:1px;width:76px;height:5px;background:#a4a4a4"></div><div style="position:absolute;left:6px;top:9px;width:76px;height:8px;background:#c4daf0"></div><div style="position:absolute;left:6px;top:33px;width:76px;height:8px;background:#c4daf0"></div><div style="position:absolute;left:25px;top:8px;width:40px;height:14px;background:#ececec;box-shadow:0 0 2px rgba(0,0,0,.3)"></div><div style="position:absolute;left:1px;top:0px;width:2px;height:2px;background:#8a6ad0"></div><div style="position:absolute;left:1px;top:3px;width:2px;height:2px;background:#1a60b0"></div><div style="position:absolute;left:1px;top:7px;width:2px;height:2px;background:#1a60b0"></div></div>
<div class="b" style="left:109px;top:854px;width:88px;height:40px;background:#f6f6f6;overflow:hidden"><div style="position:absolute;left:6px;top:1px;width:76px;height:40px;background:#fafafa;box-shadow:0 0 2px rgba(0,0,0,.45);border-radius:2px"></div><div style="position:absolute;left:13px;top:1px;width:41px;height:27px;background:linear-gradient(#a8b0b8,#c8d0d4 40%,#8a8e90 60%,#4a4a4a 85%,#101010 86%)"></div><div style="position:absolute;left:28px;top:5px;width:3px;height:20px;background:#404040"></div><div style="position:absolute;left:38px;top:13px;width:11px;height:12px;background:#4a4a4a"></div><div style="position:absolute;left:15px;top:15px;width:10px;height:10px;background:#6a6a6a"></div><div style="position:absolute;left:13px;top:33px;width:41px;height:7px;background:#b8b8b8"></div><div style="position:absolute;left:56px;top:9px;width:1px;height:25px;background:#ddd"></div></div>
<div class="b" style="left:209px;top:854px;width:88px;height:40px;background:#f6f6f6;overflow:hidden"><div style="position:absolute;left:7px;top:1px;width:75px;height:40px;background:#ececec;box-shadow:0 0 2px rgba(0,0,0,.45);border-radius:2px"></div><div style="position:absolute;left:9px;top:1px;width:67px;height:14px;background:linear-gradient(90deg,#707070,#8a8a8a 30%,#909090 60%,#8a8a8a)"></div><div style="position:absolute;left:13px;top:1px;width:4px;height:11px;background:#3a3a3a"></div><div style="position:absolute;left:22px;top:1px;width:4px;height:11px;background:#3a3a3a"></div><div style="position:absolute;left:41px;top:1px;width:4px;height:12px;background:#3a3a3a"></div><div style="position:absolute;left:9px;top:14px;width:67px;height:3px;background:#000"></div><div style="position:absolute;left:29px;top:21px;width:5px;height:4px;background:#555"></div><div style="position:absolute;left:9px;top:35px;width:73px;height:6px;background:#2a5aa8"></div><div style="position:absolute;left:27px;top:31px;width:3px;height:3px;border-radius:50%;background:#d05050"></div></div>
<div class="b" style="left:309px;top:854px;width:88px;height:40px;overflow:hidden;background:#c8ccd0"><div style="position:absolute;left:-4px;top:-4px;width:96px;height:48px;filter:blur(0.7px)"><div style="position:absolute;left:4px;top:4px;width:88px;height:40px;background:#c8ccd0"><div style="position:absolute;left:0px;top:0px;width:12px;height:32px;background:linear-gradient(90deg,#b8bcc0,#d0d4d8)"></div><div style="position:absolute;left:12px;top:0px;width:13px;height:32px;background:repeating-linear-gradient(90deg,#e8eaea 0 3px,#c8ccc8 3px 5px)"></div><div style="position:absolute;left:25px;top:0px;width:11px;height:34px;background:#303830"></div><div style="position:absolute;left:27px;top:3px;width:7px;height:27px;background:repeating-linear-gradient(#303830 0 3px,#a8a040 3px 4px)"></div><div style="position:absolute;left:36px;top:0px;width:14px;height:32px;background:linear-gradient(90deg,#c8ccd0,#dcdee0)"></div><div style="position:absolute;left:60px;top:0px;width:12px;height:34px;background:#4a5248"></div><div style="position:absolute;left:62px;top:3px;width:8px;height:27px;background:repeating-linear-gradient(#4a5248 0 3px,#b0b040 3px 4px)"></div><div style="position:absolute;left:72px;top:0px;width:16px;height:32px;background:linear-gradient(90deg,#e4eaee,#f0f4f6)"></div><div style="position:absolute;left:1px;top:15px;width:19px;height:14px;background:#3c3c3c"></div><div style="position:absolute;left:3px;top:16px;width:15px;height:10px;background:#d6ebe5"></div><div style="position:absolute;left:38px;top:15px;width:14px;height:14px;background:#3c3c3c"></div><div style="position:absolute;left:40px;top:16px;width:11px;height:10px;background:#d2e8e2"></div><div style="position:absolute;left:72px;top:15px;width:16px;height:14px;background:#3c3c3c"></div><div style="position:absolute;left:74px;top:16px;width:13px;height:10px;background:#d6ebe5"></div><div style="position:absolute;left:0px;top:29px;width:88px;height:3px;background:#7a6450"></div><div style="position:absolute;left:0px;top:32px;width:88px;height:8px;background:#3a4240"></div><div style="position:absolute;left:1px;top:33px;width:26px;height:7px;background:linear-gradient(90deg,#30a070,#60b890 60%,#30906a)"></div><div style="position:absolute;left:32px;top:34px;width:46px;height:6px;background:#5a6a6e"></div><div style="position:absolute;left:50px;top:7px;width:14px;height:25px;background:#3040a8;border-radius:5px 5px 1px 1px"></div><div style="position:absolute;left:52px;top:2px;width:7px;height:6px;background:#3050b8;border-radius:3px"></div><div style="position:absolute;left:58px;top:12px;width:6px;height:10px;background:#d8d040;border-radius:2px"></div><div style="position:absolute;left:54px;top:30px;width:8px;height:2px;background:#e8e8f0"></div></div></div></div>
<div class="b" style="left:409px;top:854px;width:88px;height:40px;overflow:hidden;background:#303030"><div style="position:absolute;left:-4px;top:-4px;width:96px;height:48px;filter:blur(0.9px)"><div style="position:absolute;left:4px;top:4px;width:88px;height:40px;background:#303030"><div style="position:absolute;left:0px;top:0px;width:8px;height:40px;background:#8a9088"></div><div style="position:absolute;left:5px;top:9px;width:30px;height:31px;background:#9a7868;border-radius:8px 4px 0 0"></div><div style="position:absolute;left:8px;top:0px;width:26px;height:12px;background:#3a5ab8;border-radius:4px 10px 2px 6px"></div><div style="position:absolute;left:18px;top:25px;width:22px;height:15px;background:#e0d040;border-radius:10px 6px 0 0"></div><div style="position:absolute;left:34px;top:0px;width:6px;height:40px;background:#d8dcd8"></div><div style="position:absolute;left:40px;top:0px;width:20px;height:40px;background:linear-gradient(90deg,#505450,#303232)"></div><div style="position:absolute;left:42px;top:14px;width:13px;height:16px;background:#d0e0d0;border-radius:50%"></div><div style="position:absolute;left:46px;top:28px;width:3px;height:8px;background:#b0c0b0"></div><div style="position:absolute;left:60px;top:0px;width:28px;height:40px;background:linear-gradient(90deg,#303030,#202020)"></div></div></div></div>
<div class="b" style="left:509px;top:854px;width:88px;height:40px;overflow:hidden;background:#303030"><div style="position:absolute;left:-4px;top:-4px;width:96px;height:48px;filter:blur(0.9px)"><div style="position:absolute;left:4px;top:4px;width:88px;height:40px;background:#303030"><div style="position:absolute;left:0px;top:0px;width:40px;height:40px;background:#404040"></div><div style="position:absolute;left:0px;top:18px;width:34px;height:22px;background:#a87868"></div><div style="position:absolute;left:14px;top:12px;width:22px;height:16px;background:#2a2a2a;border-radius:6px"></div><div style="position:absolute;left:0px;top:0px;width:36px;height:18px;background:#3050b0;border-radius:0 12px 8px 4px"></div><div style="position:absolute;left:40px;top:0px;width:10px;height:40px;background:#e0e8e8"></div><div style="position:absolute;left:50px;top:0px;width:38px;height:40px;background:linear-gradient(90deg,#7a7e7c,#3a3a3a 40%,#2a2a2a)"></div><div style="position:absolute;left:50px;top:16px;width:18px;height:24px;background:#d0e0d8;border-radius:40% 40% 20% 30%"></div></div></div></div>
<div class="b" style="left:609px;top:854px;width:88px;height:40px;overflow:hidden;background:#a8b0a0"><div style="position:absolute;left:-4px;top:-4px;width:96px;height:48px;filter:blur(0.9px)"><div style="position:absolute;left:4px;top:4px;width:88px;height:40px;background:#a8b0a0"><div style="position:absolute;left:0px;top:12px;width:20px;height:20px;background:#2a2828;border-radius:0 8px 8px 0"></div><div style="position:absolute;left:0px;top:24px;width:11px;height:16px;background:#b08070"></div><div style="position:absolute;left:0px;top:0px;width:19px;height:16px;background:#3a58b8;border-radius:0 10px 6px 0"></div><div style="position:absolute;left:33px;top:0px;width:4px;height:40px;background:#6a8060"></div><div style="position:absolute;left:37px;top:0px;width:6px;height:40px;background:#3a3a3a"></div><div style="position:absolute;left:43px;top:0px;width:20px;height:40px;background:#e0e8ec"></div><div style="position:absolute;left:63px;top:0px;width:25px;height:40px;background:linear-gradient(90deg,#606462,#303030 60%,#2a2a2a)"></div><div style="position:absolute;left:55px;top:14px;width:17px;height:26px;background:#d8e4e0;border-radius:40% 40% 10% 10%"></div></div></div></div>
<div class="b" style="left:709px;top:854px;width:88px;height:40px;overflow:hidden;background:#b0b8b0"><div style="position:absolute;left:-4px;top:-4px;width:96px;height:48px;filter:blur(0.9px)"><div style="position:absolute;left:4px;top:4px;width:88px;height:40px;background:#b0b8b0"><div style="position:absolute;left:0px;top:2px;width:10px;height:20px;background:#3a58b8;border-radius:0 8px 8px 0"></div><div style="position:absolute;left:0px;top:18px;width:6px;height:22px;background:#6a5040"></div><div style="position:absolute;left:32px;top:0px;width:10px;height:40px;background:#8a9080"></div><div style="position:absolute;left:41px;top:0px;width:2px;height:40px;background:#6a9a60"></div><div style="position:absolute;left:43px;top:0px;width:9px;height:40px;background:#404448"></div><div style="position:absolute;left:52px;top:0px;width:28px;height:40px;background:linear-gradient(90deg,#dfe8ea,#f0f4e8 50%,#dde4e4)"></div><div style="position:absolute;left:78px;top:0px;width:10px;height:40px;background:#555"></div></div></div></div>
<div class="b" style="left:809px;top:854px;width:88px;height:40px;overflow:hidden;background:#8a9a88"><div style="position:absolute;left:-4px;top:-4px;width:96px;height:48px;filter:blur(0.9px)"><div style="position:absolute;left:4px;top:4px;width:88px;height:40px;background:#8a9a88"><div style="position:absolute;left:0px;top:12px;width:34px;height:28px;background:#b08878"></div><div style="position:absolute;left:0px;top:0px;width:38px;height:14px;background:#3a5ac0;border-radius:0 8px 10px 0"></div><div style="position:absolute;left:38px;top:0px;width:2px;height:40px;background:#5a8a50"></div><div style="position:absolute;left:42px;top:0px;width:8px;height:40px;background:#3a3e40"></div><div style="position:absolute;left:50px;top:0px;width:26px;height:40px;background:#e8f0f0"></div><div style="position:absolute;left:76px;top:0px;width:12px;height:40px;background:linear-gradient(90deg,#8a8e90,#505458)"></div></div></div></div>
<div class="b" style="left:909px;top:854px;width:88px;height:40px;overflow:hidden;background:#9aa298"><div style="position:absolute;left:-4px;top:-4px;width:96px;height:48px;filter:blur(0.9px)"><div style="position:absolute;left:4px;top:4px;width:88px;height:40px;background:#9aa298"><div style="position:absolute;left:25px;top:0px;width:25px;height:16px;background:#e0e8e4;border-radius:0 0 40% 40%"></div><div style="position:absolute;left:48px;top:0px;width:12px;height:40px;background:#ececd8"></div><div style="position:absolute;left:60px;top:0px;width:22px;height:40px;background:#dce4e0"></div><div style="position:absolute;left:62px;top:0px;width:20px;height:24px;background:#eef2ee;border-radius:0 0 50% 40%"></div><div style="position:absolute;left:82px;top:0px;width:6px;height:40px;background:linear-gradient(#404040,#6a6e6a)"></div><div style="position:absolute;left:0px;top:14px;width:48px;height:26px;background:#e0d040;border-radius:60% 20% 0 0"></div><div style="position:absolute;left:0px;top:26px;width:60px;height:14px;background:#dccc40"></div></div></div></div>
<div class="b" style="left:1009px;top:854px;width:88px;height:40px;overflow:hidden;background:#9aa298"><div style="position:absolute;left:-4px;top:-4px;width:96px;height:48px;filter:blur(0.9px)"><div style="position:absolute;left:4px;top:4px;width:88px;height:40px;background:#9aa298"><div style="position:absolute;left:35px;top:0px;width:13px;height:14px;background:#e0e8e4"></div><div style="position:absolute;left:48px;top:0px;width:17px;height:40px;background:#ecedd8"></div><div style="position:absolute;left:65px;top:0px;width:23px;height:40px;background:#dce8e8"></div><div style="position:absolute;left:65px;top:20px;width:13px;height:6px;background:#e0d860"></div><div style="position:absolute;left:68px;top:24px;width:20px;height:16px;background:linear-gradient(90deg,#c8ccc8,#808480 50%,#2a2a2a)"></div><div style="position:absolute;left:0px;top:10px;width:52px;height:30px;background:#e0d040;border-radius:30% 60% 0 0"></div><div style="position:absolute;left:26px;top:0px;width:14px;height:14px;background:#3a5ab0;border-radius:4px 4px 2px 8px"></div><div style="position:absolute;left:28px;top:14px;width:6px;height:3px;background:#6a4a3a"></div></div></div></div>
<div class="b" style="left:1109px;top:854px;width:88px;height:40px;overflow:hidden;background:#c8ccd0"><div style="position:absolute;left:-4px;top:-4px;width:96px;height:48px;filter:blur(0.7px)"><div style="position:absolute;left:4px;top:4px;width:88px;height:40px;background:#c8ccd0"><div style="position:absolute;left:0px;top:0px;width:12px;height:32px;background:linear-gradient(90deg,#b8bcc0,#d0d4d8)"></div><div style="position:absolute;left:12px;top:0px;width:13px;height:32px;background:repeating-linear-gradient(90deg,#e8eaea 0 3px,#c8ccc8 3px 5px)"></div><div style="position:absolute;left:25px;top:0px;width:11px;height:34px;background:#303830"></div><div style="position:absolute;left:27px;top:3px;width:7px;height:27px;background:repeating-linear-gradient(#303830 0 3px,#a8a040 3px 4px)"></div><div style="position:absolute;left:36px;top:0px;width:14px;height:32px;background:linear-gradient(90deg,#c8ccd0,#dcdee0)"></div><div style="position:absolute;left:60px;top:0px;width:12px;height:34px;background:#4a5248"></div><div style="position:absolute;left:62px;top:3px;width:8px;height:27px;background:repeating-linear-gradient(#4a5248 0 3px,#b0b040 3px 4px)"></div><div style="position:absolute;left:72px;top:0px;width:16px;height:32px;background:linear-gradient(90deg,#e4eaee,#f0f4f6)"></div><div style="position:absolute;left:1px;top:15px;width:19px;height:14px;background:#3c3c3c"></div><div style="position:absolute;left:3px;top:16px;width:15px;height:10px;background:#d6ebe5"></div><div style="position:absolute;left:38px;top:15px;width:14px;height:14px;background:#3c3c3c"></div><div style="position:absolute;left:40px;top:16px;width:11px;height:10px;background:#d2e8e2"></div><div style="position:absolute;left:72px;top:15px;width:16px;height:14px;background:#3c3c3c"></div><div style="position:absolute;left:74px;top:16px;width:13px;height:10px;background:#d6ebe5"></div><div style="position:absolute;left:0px;top:29px;width:88px;height:3px;background:#7a6450"></div><div style="position:absolute;left:0px;top:32px;width:88px;height:8px;background:#3a4240"></div><div style="position:absolute;left:1px;top:33px;width:26px;height:7px;background:linear-gradient(90deg,#30a070,#60b890 60%,#30906a)"></div><div style="position:absolute;left:32px;top:34px;width:46px;height:6px;background:#5a6a6e"></div><div style="position:absolute;left:50px;top:7px;width:14px;height:25px;background:#3040a8;border-radius:5px 5px 1px 1px"></div><div style="position:absolute;left:52px;top:2px;width:7px;height:6px;background:#3050b8;border-radius:3px"></div><div style="position:absolute;left:58px;top:12px;width:6px;height:10px;background:#d8d040;border-radius:2px"></div><div style="position:absolute;left:54px;top:30px;width:8px;height:2px;background:#e8e8f0"></div><div style="position:absolute;left:83px;top:8px;width:5px;height:32px;background:#5a3a80;border-radius:3px 0 0 0"></div></div></div></div>
<style>
.thumb{background:#777}
.film{background:#888}
</style>
</body></html>
